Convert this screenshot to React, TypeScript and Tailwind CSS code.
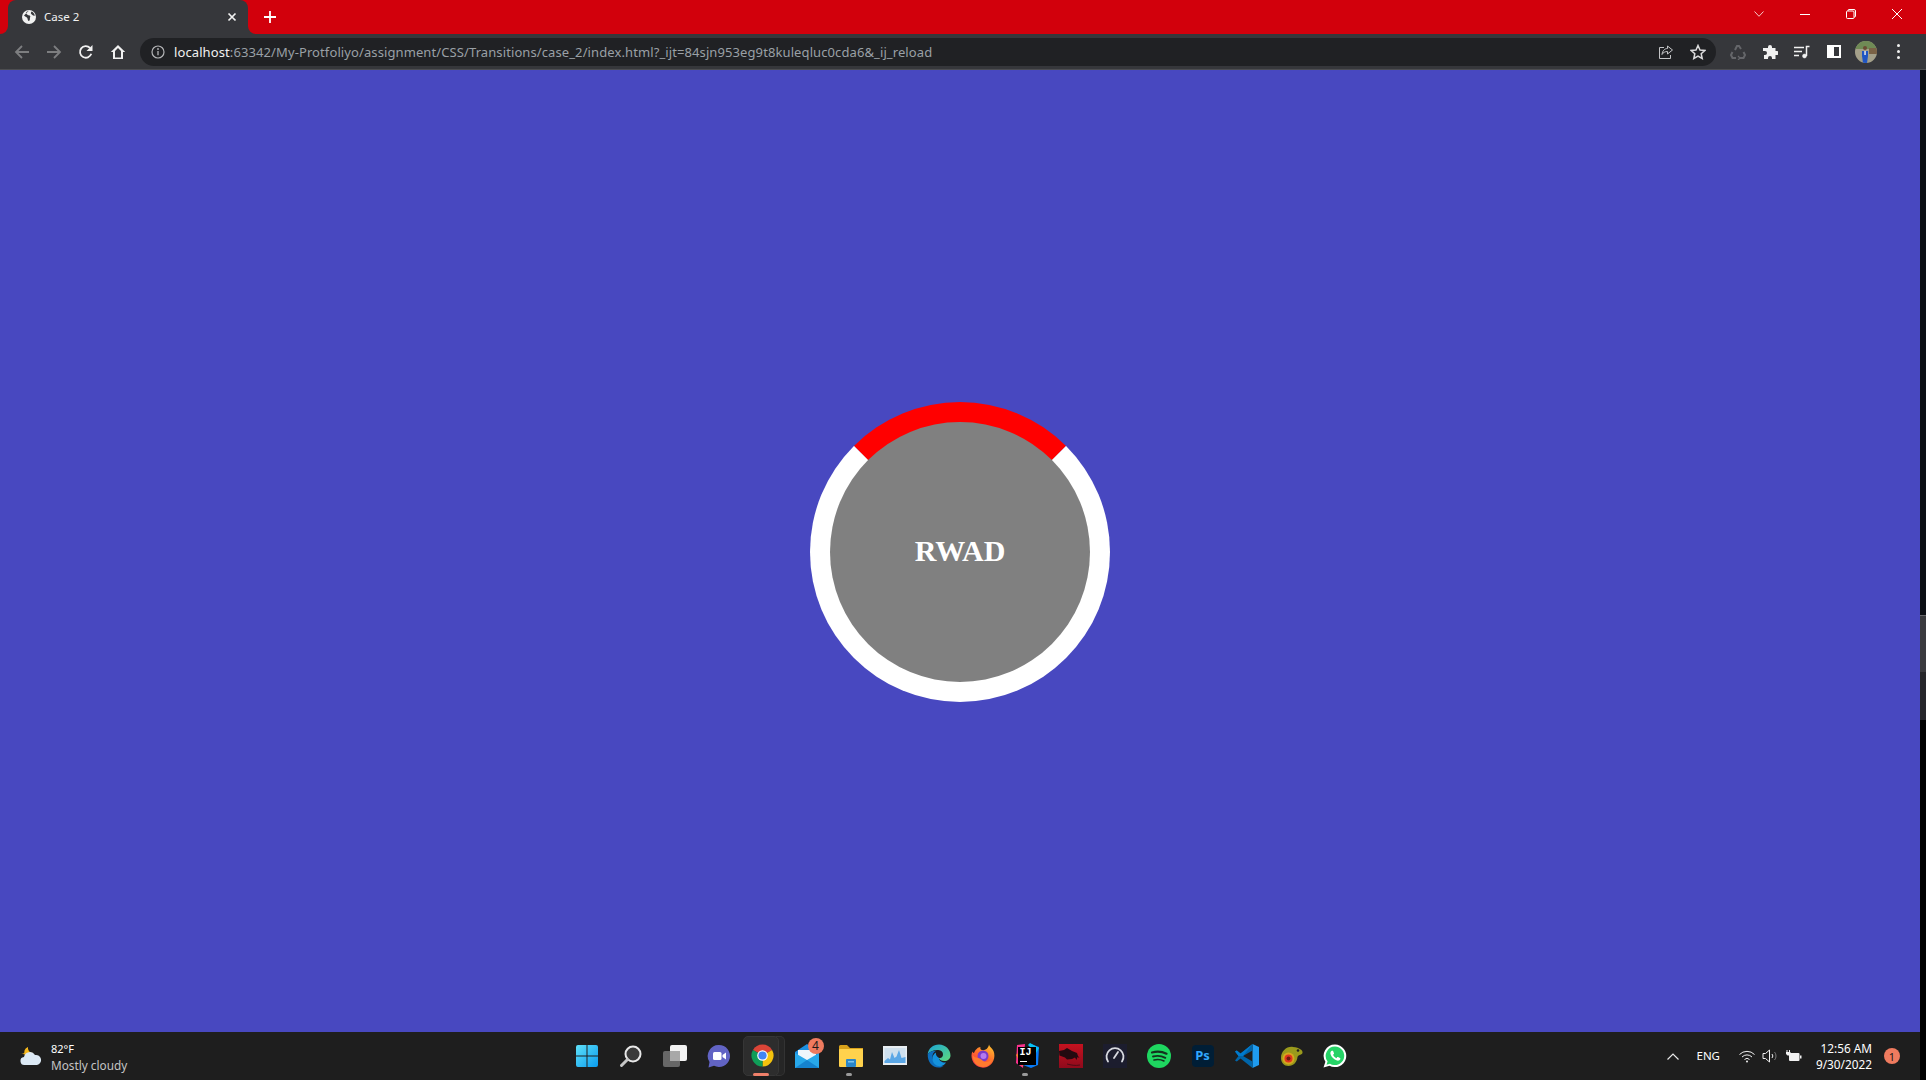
import React from 'react';

const uiFont = { fontFamily: '"Noto Sans", "Open Sans", sans-serif' };

function TaskIcon({ children, active, dot }: { children: React.ReactNode; active?: boolean; dot?: 'gray' }) {
  return (
    <div className="relative flex h-[48px] w-[44px] shrink-0 items-center justify-center">
      {active && (
        <>
          <div className="absolute left-[35px] top-[4px] h-[40px] w-[9px] rounded-r-[5px] border border-l-0 border-[#333] bg-[#262626]" />
          <div className="absolute left-[2px] top-[4px] h-[40px] w-[36px] rounded-[5px] border border-[#363636] bg-[#2d2d2d]" />
          <div className="absolute left-[12px] top-[41px] h-[3px] w-[16px] rounded-full bg-[#f0806a]" />
        </>
      )}
      {dot && <div className="absolute left-[17px] top-[41px] h-[3px] w-[6px] rounded-full bg-[#9a9a9a]" />}
      <div className="relative -ml-[1px] -mt-[1px] flex items-center justify-center">{children}</div>
    </div>
  );
}

function WindowsLogo() {
  return (
    <svg width="24" height="24" viewBox="0 0 24 24">
      <defs>
        <linearGradient id="win" x1="0" y1="0" x2="1" y2="1">
          <stop offset="0" stopColor="#5fe0f7" />
          <stop offset="1" stopColor="#0a9cf0" />
        </linearGradient>
      </defs>
      <path d="M1 3a2 2 0 0 1 2-2h8.500v10.500H1z M12.500 1H21a2 2 0 0 1 2 2v8.500h-10.500z M1 12.500h10.500V23H3a2 2 0 0 1-2-2z M12.500 12.500H23V21a2 2 0 0 1-2 2h-8.500z" fill="url(#win)" />
    </svg>
  );
}

function SearchIcon() {
  return (
    <svg width="24" height="24" viewBox="0 0 24 24">
      <circle cx="14" cy="10" r="7.500" fill="#3a3a3a" stroke="#e8e8e8" strokeWidth="2" />
      <path d="M8.500 15.500L2.500 21.500" stroke="#c8c8c8" strokeWidth="3" strokeLinecap="round" />
    </svg>
  );
}

function TaskView() {
  return (
    <svg width="24" height="24" viewBox="0 0 24 24">
      <rect x="7" y="1" width="17" height="16" rx="2" fill="#f2f2f2" />
      <rect x="0" y="7" width="17" height="16" rx="2" fill="#6e6e6e" fillOpacity="0.92" />
      <rect x="7" y="7" width="10" height="10" fill="#a8a8a8" />
    </svg>
  );
}

function TeamsIcon() {
  return (
    <svg width="24" height="24" viewBox="0 0 24 24">
      <path d="M12 1a11 11 0 1 1-5 20.800L1.500 23.500l1-5.500A11 11 0 0 1 12 1z" fill="#6264c4" />
      <rect x="6" y="8" width="8.500" height="8" rx="1.500" fill="#fff" />
      <path d="M15.500 11l3.500-2.500v7L15.500 13z" fill="#fff" />
    </svg>
  );
}

function ChromeIcon({ size = 23 }: { size?: number }) {
  return (
    <svg width={size} height={size} viewBox="0 0 24 24">
      <path d="M12 12L2.040 6.250A11.500 11.500 0 0 1 21.960 6.250z" fill="#db4437" />
      <path d="M12 12L21.960 6.250A11.500 11.500 0 0 1 12 23.500z" fill="#f4c20d" />
      <path d="M12 12L12 23.500A11.500 11.500 0 0 1 2.040 6.250z" fill="#0f9d58" />
      <circle cx="12" cy="12" r="5.500" fill="#fff" />
      <circle cx="12" cy="12" r="4.300" fill="#4285f4" />
    </svg>
  );
}

function MailIcon() {
  return (
    <div className="relative h-[24px] w-[24px]">
      <svg width="24" height="24" viewBox="0 0 24 24">
        <path d="M0 8L12 0l12 8v16H0z" fill="#1b8fe0" />
        <path d="M3 6h18v6l-9 5-9-5z" fill="#eef6fb" />
        <path d="M0 9l12 7 12-7v15H0z" fill="#28a8ea" />
        <path d="M0 24l12-8 12 8z" fill="#1583cf" />
      </svg>
      <div className="absolute -right-[5px] -top-[6px] flex h-[16px] w-[16px] items-center justify-center rounded-full bg-[#ef7b5f] text-[12px] leading-none text-[#1a1a1a]" style={uiFont}>
        4
      </div>
    </div>
  );
}

function FolderIcon() {
  return (
    <svg width="24" height="24" viewBox="0 0 24 24">
      <path d="M0 2.500A1.500 1.500 0 0 1 1.500 1H8l3 3h13v3H0z" fill="#d9a21b" />
      <rect x="0" y="5" width="24" height="18" rx="1" fill="#ffd24d" />
      <rect x="7" y="15" width="10" height="8" rx="1" fill="#2a86c9" />
      <rect x="9" y="17" width="6" height="1.500" fill="#7cc4ee" />
    </svg>
  );
}

function MonitorIcon() {
  return (
    <svg width="24" height="20" viewBox="0 0 24 20">
      <rect x="0" y="0" width="24" height="19" fill="#e9eef2" />
      <rect x="1.500" y="2" width="21" height="15" fill="#cfe0ee" />
      <path d="M1.500 15L5 12l2 1.500L9 6l2.500 6 2-1.500L16 4l2.500 8 4-1v6h-21z" fill="#5ba7e6" />
    </svg>
  );
}

function EdgeIcon() {
  return (
    <svg width="24" height="24" viewBox="0 0 24 24">
      <defs>
        <linearGradient id="edgeTop" x1="0" y1="0" x2="1" y2="1">
          <stop offset="0" stopColor="#1aa3d8" />
          <stop offset="1" stopColor="#5edb7a" />
        </linearGradient>
      </defs>
      <path d="M12 .5C18.500.5 23.500 5.500 23.500 11.500c0 3.500-3 5.500-6 5.500-3.500 0-5.500-1.500-5.500-3 1.500 0 4-.5 4-3.500C16 7 13 6 10.500 6 6 6 2.500 8 .7 10 1.500 4.500 6 .5 12 .5z" fill="url(#edgeTop)" />
      <path d="M.7 10C3 7.500 6 6.500 9 6.800 6.500 8 5 10.500 5.500 14c.6 4.500 5 9 11 8.200-1.500.8-3 1.300-5 1.300C5 23.500.5 18 .7 10z" fill="#0c6fc0" />
      <path d="M12 14c0 3 3.500 5 7 4.500-1 2-3 3.300-5.500 3.700-4.500.3-7.500-2.700-8-6.700-.3-3 .8-5.500 3.500-7-.5 2 .5 4 3 5.500z" fill="#1592dc" />
    </svg>
  );
}

function FirefoxIcon() {
  return (
    <svg width="24" height="24" viewBox="0 0 24 24">
      <defs>
        <linearGradient id="fox" x1="0.800" y1="0" x2="0.200" y2="1">
          <stop offset="0" stopColor="#ffc02e" />
          <stop offset="0.500" stopColor="#ff6a2b" />
          <stop offset="1" stopColor="#f5304f" />
        </linearGradient>
      </defs>
      <path d="M18 .5c.5 2.500 3 3.500 4.500 6.500 2 5 .5 10.500-3 13.800-4.500 4-11.500 3.700-15.500-.5C.5 16.500-.5 11 1.500 7.500c.5 1 1 1.500 1.500 1.500C4 6 7 3 9.500 3 9 4.500 9.500 5.500 11 6c3 .7 6.500-1.500 7-5.500z" fill="url(#fox)" />
      <circle cx="12" cy="12" r="5.500" fill="#7a3bc8" />
      <circle cx="12.500" cy="12" r="3" fill="#b57af0" />
      <path d="M1.500 11c3 4 6 1.500 10 5.500 3 2.500 6 2 10-2-1 5-5 8.500-9.500 8.500C6 23 1.500 18 1.500 11z" fill="#ff7a2e" />
    </svg>
  );
}

function IntelliJIcon() {
  return (
    <div className="relative h-[24px] w-[24px]">
      <svg className="absolute -left-[1px] -top-[1px]" width="26" height="26" viewBox="0 0 26 26">
        <path d="M3 2l8-1-2 24-7-5z" fill="#fc318c" />
        <path d="M17 1l8 3-1 18-7 3-8-3z" fill="#087cfa" />
        <path d="M2 12l6 11 5-3-9-10z" fill="#fe7f2d" />
        <path d="M16 0l9 5-3 5-8-8z" fill="#07c3f2" />
      </svg>
      <div className="absolute left-[3px] top-[3px] h-[18px] w-[18px] bg-black">
        <div className="pl-[2px] pt-[1px] text-[10px] font-bold leading-[10px] text-white" style={{ fontFamily: '"Liberation Mono", monospace' }}>
          IJ
        </div>
        <div className="ml-[2px] mt-[3px] h-[1.500px] w-[7px] bg-white" />
      </div>
    </div>
  );
}

function KaliIcon() {
  return (
    <svg width="24" height="24" viewBox="0 0 24 24">
      <defs>
        <linearGradient id="kali" x1="0" y1="0" x2="0" y2="1">
          <stop offset="0" stopColor="#c4121f" />
          <stop offset="1" stopColor="#8f0a1c" />
        </linearGradient>
      </defs>
      <rect width="24" height="24" fill="url(#kali)" />
      <path d="M0 7l5-1 3-2 5 3 5 2 1 3 1.500 2-2-1-1 3-1.500-2.500-3 1.500-5 .5-2-2-5.500-2z" fill="#230a10" />
      <path d="M8 20c4 1 8 2 13 1" stroke="#3a0c14" strokeWidth="0.800" fill="none" />
    </svg>
  );
}

function SpeedIcon() {
  return (
    <svg width="24" height="24" viewBox="0 0 24 24">
      <rect width="24" height="24" fill="#1c1d2e" />
      <path d="M5 17.500a8.500 8.500 0 1 1 14 0" fill="none" stroke="#d8dae0" strokeWidth="1.800" strokeLinecap="round" />
      <path d="M11 14l4-6" stroke="#d8dae0" strokeWidth="1.800" strokeLinecap="round" />
    </svg>
  );
}

function SpotifyIcon() {
  return (
    <svg width="24" height="24" viewBox="0 0 24 24">
      <circle cx="12" cy="12" r="12" fill="#1ed760" />
      <g fill="none" stroke="#14301e" strokeLinecap="round">
        <path d="M5 8.500c5-1.300 10-1 14.500 1.200" strokeWidth="2.200" />
        <path d="M6 12.500c4-1 8.500-.7 12.300 1.300" strokeWidth="1.900" />
        <path d="M7 16c3.500-.8 7-.5 10 1" strokeWidth="1.600" />
      </g>
    </svg>
  );
}

function PsIcon() {
  return (
    <div className="flex h-[22px] w-[22px] items-center justify-center rounded-[4px] bg-[#001e36] text-[13px] font-bold text-[#31a8ff]" style={uiFont}>
      Ps
    </div>
  );
}

function VsCodeIcon() {
  return (
    <svg width="24" height="24" viewBox="0 0 24 24">
      <path d="M17.500 0L24 3v18l-6.500 3z" fill="#1f9cf0" />
      <path d="M17.500 0v6.500L8 12l9.500 5.500V24L5.500 14.500 1.800 17.500 0 16.500 3.500 12 0 7.500l1.800-1 3.700 3z" fill="#0065a9" />
      <path d="M17.500 0L5.500 9.500 1.800 6.500 0 7.500 3.500 12 8 12z" fill="#007acc" />
    </svg>
  );
}

function GimpLikeIcon() {
  return (
    <svg width="24" height="24" viewBox="0 0 24 24">
      <path d="M2 14C2 7 8 2 14 3c3 0 6 1 8.500 3 1.500 1.500 1.500 4-.5 4.500-2 .5-3 1-3.500 2.500-.5 5-4 9-9 9-4.500 0-7.500-3.500-7.500-8z" fill="#9a9a1c" />
      <circle cx="19" cy="6.500" r="1.300" fill="#222" />
      <circle cx="9.500" cy="14.500" r="6" fill="#d6a51e" />
      <circle cx="9.500" cy="14.500" r="4" fill="#e0341f" />
      <circle cx="9.500" cy="14.500" r="2" fill="#6b1a10" />
    </svg>
  );
}

function WhatsAppIcon() {
  return (
    <svg width="24" height="24" viewBox="0 0 24 24">
      <path d="M12 .5a11.300 11.300 0 1 1-5.500 21.200L.5 23.500l1.900-5.700A11.300 11.300 0 0 1 12 .5z" fill="#fff" />
      <path d="M12 2.500a9.300 9.300 0 1 1-5 17.200l-3.500 1 1.100-3.300A9.300 9.300 0 0 1 12 2.500z" fill="#25d366" />
      <path d="M8.800 6.800c-1 .5-1.700 1.700-1.300 3.300.8 3 3.500 5.800 6.500 6.500 1.500.4 2.800-.3 3.300-1.300.2-.5.100-1-.3-1.200l-2-1c-.4-.2-.8 0-1 .3l-.6.8c-1.500-.6-2.800-1.900-3.400-3.400l.7-.6c.3-.2.400-.6.300-1l-.9-2.100c-.2-.4-.5-.5-.8-.3z" fill="#fff" />
    </svg>
  );
}

function ToolbarButton({ children, className = '' }: { children: React.ReactNode; className?: string }) {
  return <div className={`flex h-[32px] w-[32px] shrink-0 items-center justify-center ${className}`}>{children}</div>;
}

function TitleBar() {
  return (
    <div className="relative z-10 flex h-[34px] shrink-0 items-start bg-[#d2000c] pl-[8px]">
      <div className="relative flex h-[34px] w-[240px] items-center rounded-t-[8px] bg-[#36373b] pl-[13px] pr-[11px]">
        <div className="absolute -left-[8px] bottom-0 h-[8px] w-[8px] bg-[#36373b]">
          <div className="h-full w-full rounded-br-[8px] bg-[#d2000c]" />
        </div>
        <div className="absolute -right-[8px] bottom-0 h-[8px] w-[8px] bg-[#36373b]">
          <div className="h-full w-full rounded-bl-[8px] bg-[#d2000c]" />
        </div>
        <svg width="16" height="16" viewBox="0 0 16 16">
          <circle cx="8" cy="8" r="7" fill="#f1f1f1" />
          <path d="M8 1.500c-1 .8-2.600 1-3 2.300-.3 1 .9 1.200 1.500 2 .7.800 2.200.3 2.700 1.200.4.800-.4 1.500-.3 2.400.1.800-.2 2-.9 2.500-1.200-.2-1.300-1.500-1.500-2.500C6.300 8.300 4.500 8 3 6.500M10.500 2.500c1.500.6 3 2.200 3.300 4-.8.600-1.800 0-2.400-.5-.7-.7-1.800-1.200-1.500-2.300z" fill="#36373b" />
        </svg>
        <div className="ml-[7px] flex-1 text-[11.5px] leading-none text-[#f1f1f1]" style={uiFont}>
          Case 2
        </div>
        <svg width="10" height="10" viewBox="0 0 10 10">
          <path d="M1.500 1.500l7 7M8.500 1.500l-7 7" stroke="#f1f1f1" strokeWidth="1.700" />
        </svg>
      </div>
      <div className="ml-[16px] flex h-[34px] items-center">
        <svg width="12" height="12" viewBox="0 0 12 12">
          <path d="M6 0v12M0 6h12" stroke="#fff" strokeWidth="1.800" />
        </svg>
      </div>
      <div className="ml-auto flex h-[28px] items-center">
        <svg className="mr-[36px]" width="10" height="6" viewBox="0 0 10 6">
          <path d="M.5.500L5 5.300 9.500.500" fill="none" stroke="#f3c6c6" strokeWidth="1" />
        </svg>
        <div className="mr-[36px] h-[1px] w-[10px] bg-white" />
        <svg className="mr-[36px]" width="10" height="10" viewBox="0 0 10 10">
          <path d="M2 2V1.500A1 1 0 0 1 3 .500h5A1.500 1.500 0 0 1 9.500 2v5a1 1 0 0 1-1 1H8" fill="none" stroke="#fff" />
          <rect x=".5" y="2" width="7.500" height="7.500" rx="1" fill="none" stroke="#fff" />
        </svg>
        <svg className="mr-[24px]" width="10" height="10" viewBox="0 0 10 10">
          <path d="M0 0l10 10M10 0L0 10" stroke="#fff" strokeWidth="1" />
        </svg>
      </div>
    </div>
  );
}

function Toolbar() {
  return (
    <div className="flex h-[36px] shrink-0 items-center border-b border-[#4d4e51] bg-[#36373b] pl-[6px] pr-[12px]">
      <ToolbarButton>
        <svg width="16" height="16" viewBox="0 0 16 16">
          <path d="M15 8H2M8 2L2 8l6 6" fill="none" stroke="#7d7e80" strokeWidth="1.800" />
        </svg>
      </ToolbarButton>
      <ToolbarButton>
        <svg width="16" height="16" viewBox="0 0 16 16">
          <path d="M1 8h13M8 2l6 6-6 6" fill="none" stroke="#7d7e80" strokeWidth="1.800" />
        </svg>
      </ToolbarButton>
      <ToolbarButton>
        <svg width="16" height="16" viewBox="0 0 16 16">
          <path d="M13.300 9.800A5.800 5.800 0 1 1 12 3.900" fill="none" stroke="#f1f1f1" strokeWidth="1.800" />
          <path d="M14.500 1v6h-6z" fill="#f1f1f1" />
        </svg>
      </ToolbarButton>
      <ToolbarButton>
        <svg width="16" height="16" viewBox="0 0 16 16">
          <path d="M8 1L.8 8h2.200v7h10V8h2.200zM5 13.500V7l3-3 3 3v6.500z" fill="#f1f1f1" fillRule="evenodd" />
        </svg>
      </ToolbarButton>
      <div className="ml-[6px] flex h-[28px] w-[1576px] shrink-0 items-center rounded-full bg-[#202124] pl-[11px] pr-[2px]">
        <svg width="14" height="14" viewBox="0 0 14 14">
          <circle cx="7" cy="7" r="6" fill="none" stroke="#b4b5b7" strokeWidth="1.200" />
          <path d="M7 6v4.200" stroke="#b4b5b7" strokeWidth="1.300" />
          <circle cx="7" cy="4" r=".9" fill="#b4b5b7" />
        </svg>
        <div className="ml-[9px] flex-1 whitespace-nowrap pt-[1px] text-[13px] leading-none tracking-[0.1px] text-[#9aa0a6]" style={uiFont}>
          <span className="text-[#f1f1f1]">localhost</span>:63342/My-Protfoliyo/assignment/CSS/Transitions/case_2/index.html?_ijt=84sjn953eg9t8kuleqluc0cda6&amp;_ij_reload
        </div>
        <ToolbarButton>
          <svg width="16" height="16" viewBox="0 0 16 16" fill="none" stroke="#c4c5c7" strokeWidth="1">
            <path d="M6 3.500H1.500v11h11V11" />
            <path d="M9.500 2l5 4-5 4V7.500C7 7.500 5 8.500 4 10.500c.3-3.500 2.500-6 5.500-6z" />
          </svg>
        </ToolbarButton>
        <ToolbarButton>
          <svg width="16" height="16" viewBox="0 0 16 16">
            <path d="M8 1.500l2 4.500 4.800.5-3.600 3.200 1 4.800L8 12l-4.200 2.500 1-4.800L1.200 6.500 6 6z" fill="none" stroke="#dcdcdd" strokeWidth="1.500" />
          </svg>
        </ToolbarButton>
      </div>
      <ToolbarButton className="ml-[6px]">
        <svg width="16" height="16" viewBox="0 0 16 16" fill="none" stroke="#65666a" strokeWidth="2">
          <path d="M5 6l2-4h2l2 3M13.500 8l1.500 3-1.500 3h-3.500M6 14H2.500L1 11l1.500-3" />
          <path d="M8 12l2 2-2 2" strokeWidth="1.200" />
        </svg>
      </ToolbarButton>
      <ToolbarButton>
        <svg className="-ml-[1px]" width="16" height="16" viewBox="0 0 16 16">
          <path d="M6 3a2 2 0 0 1 4 0v1h3.500v3H15a2 2 0 0 1 0 4h-1.500v4H10v-1a2 2 0 0 0-4 0v1H2v-4h1a2 2 0 0 0 0-4H1V4h5z" fill="#f1f1f1" />
        </svg>
      </ToolbarButton>
      <ToolbarButton>
        <svg width="16" height="14" viewBox="0 0 16 14" fill="none" stroke="#f1f1f1">
          <path d="M0 2.500h10M0 6.500h8M0 10.500h5" strokeWidth="1.400" />
          <path d="M12.500 11V1.500h3" strokeWidth="1.500" />
          <circle cx="10.500" cy="11" r="2" fill="#f1f1f1" strokeWidth="0.500" />
        </svg>
      </ToolbarButton>
      <ToolbarButton>
        <div className="flex h-[13px] w-[14px] justify-end bg-white">
          <div className="mb-[2px] mr-[2px] mt-[2px] h-[9px] w-[5px] bg-[#36373b]" />
        </div>
      </ToolbarButton>
      <ToolbarButton>
        <svg width="22" height="22" viewBox="0 0 22 22">
          <defs>
            <clipPath id="avatar">
              <circle cx="11" cy="11" r="11" />
            </clipPath>
          </defs>
          <g clipPath="url(#avatar)">
            <rect width="22" height="22" fill="#a4a08a" />
            <rect width="22" height="8" fill="#6f8a55" />
            <rect x="14" y="7" width="8" height="6" fill="#7a6246" />
            <circle cx="10" cy="7" r="2" fill="#6b4a33" />
            <path d="M7 10h6v5l-1 7H8l-1-7z" fill="#1f55c4" />
            <rect x="9.300" y="10" width="1.500" height="4" fill="#e6e6e6" />
          </g>
        </svg>
      </ToolbarButton>
      <ToolbarButton>
        <div className="flex flex-col gap-[3px]">
          <div className="h-[3px] w-[3px] rounded-full bg-[#f1f1f1]" />
          <div className="h-[3px] w-[3px] rounded-full bg-[#f1f1f1]" />
          <div className="h-[3px] w-[3px] rounded-full bg-[#f1f1f1]" />
        </div>
      </ToolbarButton>
    </div>
  );
}

function Taskbar() {
  return (
    <div className="flex h-[48px] shrink-0 items-center bg-[#1e1e1e]" style={uiFont}>
      <div className="flex w-[565px] shrink-0 items-center pl-[20px]">
        <svg width="22" height="20" viewBox="0 0 22 20">
          <path d="M5 9a5.500 5.500 0 0 1 3-8 5 5 0 0 0 5 6z" fill="#f5b71c" />
          <path d="M0 7c2 .8 4 .8 6-.5l2 3z" fill="#f5b71c" />
          <path d="M5 19a4 4 0 0 1-1-8 6 6 0 0 1 11-2 5 5 0 0 1 2 10z" fill="#dce9f5" />
        </svg>
        <div className="ml-[9px] flex flex-col pt-[1px]">
          <div className="text-[11px] leading-[16px] text-white">82°F</div>
          <div className="text-[11.8px] leading-[16px] text-[#c4c4c4]">Mostly cloudy</div>
        </div>
      </div>
      <div className="flex items-center">
        <TaskIcon><WindowsLogo /></TaskIcon>
        <TaskIcon><SearchIcon /></TaskIcon>
        <TaskIcon><TaskView /></TaskIcon>
        <TaskIcon><TeamsIcon /></TaskIcon>
        <TaskIcon active><ChromeIcon /></TaskIcon>
        <TaskIcon><MailIcon /></TaskIcon>
        <TaskIcon dot="gray"><FolderIcon /></TaskIcon>
        <TaskIcon><MonitorIcon /></TaskIcon>
        <TaskIcon><EdgeIcon /></TaskIcon>
        <TaskIcon><FirefoxIcon /></TaskIcon>
        <TaskIcon dot="gray"><IntelliJIcon /></TaskIcon>
        <TaskIcon><KaliIcon /></TaskIcon>
        <TaskIcon><SpeedIcon /></TaskIcon>
        <TaskIcon><SpotifyIcon /></TaskIcon>
        <TaskIcon><PsIcon /></TaskIcon>
        <TaskIcon><VsCodeIcon /></TaskIcon>
        <TaskIcon><GimpLikeIcon /></TaskIcon>
        <TaskIcon><WhatsAppIcon /></TaskIcon>
      </div>
      <div className="ml-auto flex items-center pr-[20px]">
        <svg width="12" height="7" viewBox="0 0 12 7">
          <path d="M.5 6.500L6 1l5.500 5.500" fill="none" stroke="#e8e8e8" strokeWidth="1.200" />
        </svg>
        <div className="ml-[17px] text-[11.5px] text-white">ENG</div>
        <svg className="ml-[19px]" width="16" height="13" viewBox="0 0 16 13" fill="none" stroke="#f1f1f1" strokeWidth="1">
          <path d="M.5 4.500a10.500 10.500 0 0 1 15 0M3 7a7 7 0 0 1 10 0M5.500 9.500a3.500 3.500 0 0 1 5 0" />
          <circle cx="8" cy="11.500" r="1" fill="#f1f1f1" stroke="none" />
        </svg>
        <svg className="ml-[7px]" width="16" height="14" viewBox="0 0 16 14" fill="none" stroke="#f1f1f1" strokeWidth="1">
          <path d="M1 4.500h2.500L7.500 1v12l-4-3.500H1z" />
          <path d="M10 5a3 3 0 0 1 0 4" />
          <path d="M12.500 3a6 6 0 0 1 0 8" stroke="#777" />
        </svg>
        <svg className="ml-[8px]" width="16" height="12" viewBox="0 0 16 12">
          <path d="M1 0v2M3.500 0v2" stroke="#f1f1f1" strokeWidth="1" />
          <path d="M0 2h4.500v2L3 5.500H1.500L0 4z" fill="#f1f1f1" />
          <rect x="3" y="3" width="10.500" height="8" rx="1" fill="#f1f1f1" />
          <rect x="14" y="5.500" width="1.500" height="3" fill="#f1f1f1" />
        </svg>
        <div className="ml-[10px] flex w-[60px] flex-col items-end text-[11.8px] leading-[16px] text-white">
          <div>12:56 AM</div>
          <div>9/30/2022</div>
        </div>
        <div className="ml-[12px] flex h-[16px] w-[16px] items-center justify-center rounded-full bg-[#ef7b5f] text-[11px] leading-none text-[#1a1a1a]">
          1
        </div>
      </div>
    </div>
  );
}

export default function App() {
  return (
    <div className="flex h-[1080px] w-[1926px] flex-col overflow-hidden bg-black">
      <TitleBar />
      <Toolbar />
      <div className="flex min-h-0 flex-1">
        <div className="flex w-[1920px] shrink-0 flex-col">
          <main className="flex flex-1 justify-center bg-[#4848c0] pt-[332px]">
            <div className="flex h-[300px] w-[300px] items-center justify-center rounded-full border-[20px] border-white border-t-[#ff0000] bg-[#808080] pb-[2px]">
              <span className="text-[30px] font-bold leading-none text-white" style={{ fontFamily: '"Liberation Serif", serif' }}>
                RWAD
              </span>
            </div>
          </main>
          <Taskbar />
        </div>
        <div className="flex w-[6px] flex-col bg-black">
          <div className="h-[545px] bg-[#0b0e14]" />
          <div className="h-[57px] border-t border-[#66676a] bg-[#3a3a3e]" />
          <div className="h-[48px] bg-[#26262a]" />
        </div>
      </div>
    </div>
  );
}
